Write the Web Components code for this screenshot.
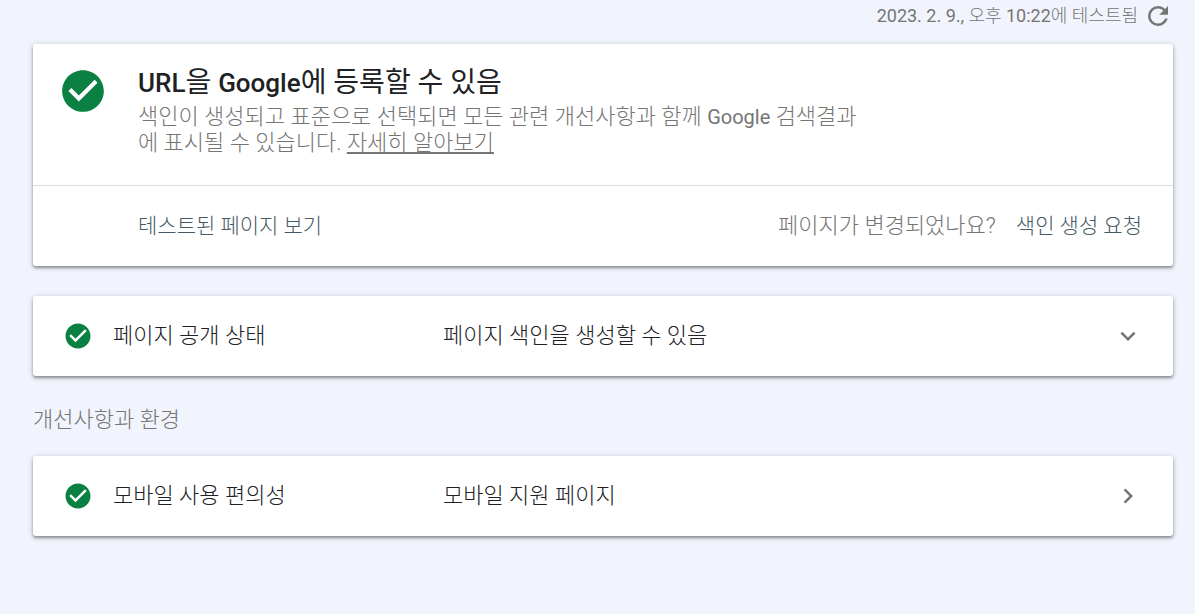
<!DOCTYPE html>
<html lang="ko">
<head>
<meta charset="utf-8">
<meta name="viewport" content="width=device-width, initial-scale=1">
<title>URL 검사</title>
<style>
  body {
    background: #f1f4fc;
    color: #202124;
    font-family: Roboto, "Noto Sans CJK KR", sans-serif;
    font-weight: 300;
    margin: 0;
  }

  a {
    color: inherit;
  }

  .latin {
    font-weight: 400;
  }

  [slot="title"] .latin {
    font-size: 26px;
    font-weight: 500;
  }

  [slot="text"] .latin {
    font-size: 20px;
  }
</style>
</head>
<body>
<inspection-page>
  <test-time slot="time"><span class="latin">2023. 2. 9.,</span> 오후 <span class="latin">10:22</span>에 테스트됨</test-time>

  <verdict-card>
    <span slot="title"><span class="latin">URL</span>을 <span class="latin">Google</span>에 등록할 수 있음</span>
    <span slot="text">색인이 생성되고 표준으로 선택되면 모든 관련 개선사항과 함께 <span class="latin">Google</span> 검색결과에 표시될 수 있습니다. <a href="#">자세히 알아보기</a></span>
    <span slot="view">테스트된 페이지 보기</span>
    <span slot="question">페이지가 변경되었나요?</span>
    <span slot="request">색인 생성 요청</span>
  </verdict-card>

  <result-row>
    <span slot="name">페이지 공개 상태</span>
    <span slot="value">페이지 색인을 생성할 수 있음</span>
  </result-row>

  <section-label>개선사항과 환경</section-label>

  <result-row direction="right">
    <span slot="name">모바일 사용 편의성</span>
    <span slot="value">모바일 지원 페이지</span>
  </result-row>
</inspection-page>

<script>
class InspectionPage extends HTMLElement {

    constructor() {
        super();
        this.shadow = this.attachShadow({ mode: 'open' });
    }

    connectedCallback() {
        this.render();
    }

    render() {

        this.shadow.innerHTML =
        /*html*/`
      <style>
        :host{
        display: block;
        padding: 0 22px 30px 33px;
        }

        header{
        align-items: center;
        display: flex;
        height: 32px;
        justify-content: flex-end;
        margin-bottom: 12px;
        }
      </style>
    <header>
        <slot name="time"></slot>
    </header>
    <main>
        <slot></slot>
    </main>
        `
    }
}

class TestTime extends HTMLElement {

    constructor() {
        super();
        this.shadow = this.attachShadow({ mode: 'open' });
    }

    connectedCallback() {
        this.render();
    }

    render() {

        this.shadow.innerHTML =
        /*html*/`
      <style>
        :host{
        align-items: center;
        color: #757575;
        display: flex;
        font-size: 18px;
        gap: 5px;
        line-height: 24px;
        }

        button{
        background: none;
        border: none;
        cursor: pointer;
        display: flex;
        padding: 0;
        }

        svg{
        fill: #757575;
        height: 30px;
        width: 30px;
        }
      </style>
        <span><slot></slot></span>
        <button type="button" aria-label="다시 테스트">
            <svg viewBox="0 0 24 24"><path d="M17.65,6.35C16.2,4.9 14.21,4 12,4A8,8 0 0,0 4,12A8,8 0 0,0 12,20C15.73,20 18.84,17.45 19.73,14H17.65C16.83,16.33 14.61,18 12,18A6,6 0 0,1 6,12A6,6 0 0,1 12,6C13.66,6 15.14,6.69 16.22,7.78L13,11H20V4L17.65,6.35Z" /></svg>
        </button>
        `
    }
}

class StatusIcon extends HTMLElement {

    constructor() {
        super();
        this.shadow = this.attachShadow({ mode: 'open' });
    }

    connectedCallback() {
        this.render();
    }

    render() {

        this.shadow.innerHTML =
        /*html*/`
      <style>
        :host{
        display: block;
        flex: none;
        height: var(--icon-size, 30px);
        width: var(--icon-size, 30px);
        }

        svg{
        display: block;
        fill: #0b8043;
        height: 100%;
        width: 100%;
        }
      </style>
        <svg viewBox="0 0 24 24" aria-hidden="true"><path d="M12,2C6.48,2 2,6.48 2,12C2,17.52 6.48,22 12,22C17.52,22 22,17.52 22,12C22,6.48 17.52,2 12,2M10,17L5,12L6.41,10.59L10,14.17L17.59,6.58L19,8L10,17Z" /></svg>
        `
    }
}

class VerdictCard extends HTMLElement {

    constructor() {
        super();
        this.shadow = this.attachShadow({ mode: 'open' });
    }

    connectedCallback() {
        this.render();
    }

    render() {

        this.shadow.innerHTML =
        /*html*/`
      <style>
        :host{
        background: #fff;
        border-radius: 3px;
        box-shadow: 0 2px 3px rgba(60, 64, 67, 0.5), 0 1px 6px rgba(60, 64, 67, 0.2);
        display: block;
        margin-bottom: 30px;
        }

        .verdict{
        --icon-size: 50px;
        border-bottom: 1px solid #dadce0;
        display: flex;
        gap: 30px;
        padding: 22px 25px 30px;
        }

        h1{
        font-size: 28px;
        font-weight: 400;
        line-height: 34px;
        margin: 0 0 4px;
        }

        p{
        color: #757575;
        font-size: 22px;
        line-height: 25px;
        margin: 0;
        max-width: 720px;
        word-break: break-all;
        }

        .actions{
        align-items: center;
        display: flex;
        font-size: 21px;
        gap: 20px;
        line-height: 28px;
        padding: 26px 31px 26px 105px;
        }

        .question{
        color: #757575;
        font-size: 22px;
        margin-left: auto;
        }

        button{
        background: none;
        border: none;
        color: #455a64;
        cursor: pointer;
        font: inherit;
        padding: 0;
        }
      </style>
    <section class="verdict">
        <status-icon></status-icon>
        <div>
            <h1><slot name="title"></slot></h1>
            <p><slot name="text"></slot></p>
        </div>
    </section>
    <div class="actions">
        <button type="button"><slot name="view"></slot></button>
        <span class="question"><slot name="question"></slot></span>
        <button type="button"><slot name="request"></slot></button>
    </div>
        `
    }
}

class ResultRow extends HTMLElement {

    constructor() {
        super();
        this.shadow = this.attachShadow({ mode: 'open' });
    }

    connectedCallback() {
        this.render();
    }

    render() {

        const arrow = this.getAttribute("direction") === "right"
            ? "M8.59,16.58L13.17,12L8.59,7.41L10,6L16,12L10,18L8.59,16.58Z"
            : "M7.41,8.58L12,13.17L16.59,8.58L18,10L12,16L6,10L7.41,8.58Z";

        this.shadow.innerHTML =
        /*html*/`
      <style>
        :host{
        background: #fff;
        border-radius: 3px;
        box-shadow: 0 2px 3px rgba(60, 64, 67, 0.5), 0 1px 6px rgba(60, 64, 67, 0.2);
        display: block;
        }

        button{
        align-items: center;
        background: none;
        border: none;
        color: inherit;
        cursor: pointer;
        display: flex;
        font: inherit;
        font-size: 22px;
        line-height: 28px;
        padding: 25px 30px;
        text-align: left;
        width: 100%;
        }

        .name{
        flex: none;
        margin-left: 20px;
        width: 330px;
        }

        .value{
        flex: 1;
        }

        .arrow{
        fill: #757575;
        flex: none;
        height: 30px;
        width: 30px;
        }
      </style>
        <button type="button">
            <status-icon></status-icon>
            <span class="name"><slot name="name"></slot></span>
            <span class="value"><slot name="value"></slot></span>
            <svg class="arrow" viewBox="0 0 24 24" aria-hidden="true"><path d="${arrow}" /></svg>
        </button>
        `
    }
}

class SectionLabel extends HTMLElement {

    constructor() {
        super();
        this.shadow = this.attachShadow({ mode: 'open' });
    }

    connectedCallback() {
        this.render();
    }

    render() {

        this.shadow.innerHTML =
        /*html*/`
      <style>
        :host{
        display: block;
        padding: 30px 0 22px;
        }

        h2{
        color: #757575;
        font-size: 22px;
        font-weight: inherit;
        line-height: 28px;
        margin: 0;
        }
      </style>
        <h2><slot></slot></h2>
        `
    }
}

customElements.define('inspection-page', InspectionPage);
customElements.define('test-time', TestTime);
customElements.define('status-icon', StatusIcon);
customElements.define('verdict-card', VerdictCard);
customElements.define('result-row', ResultRow);
customElements.define('section-label', SectionLabel);
</script>
</body>
</html>
